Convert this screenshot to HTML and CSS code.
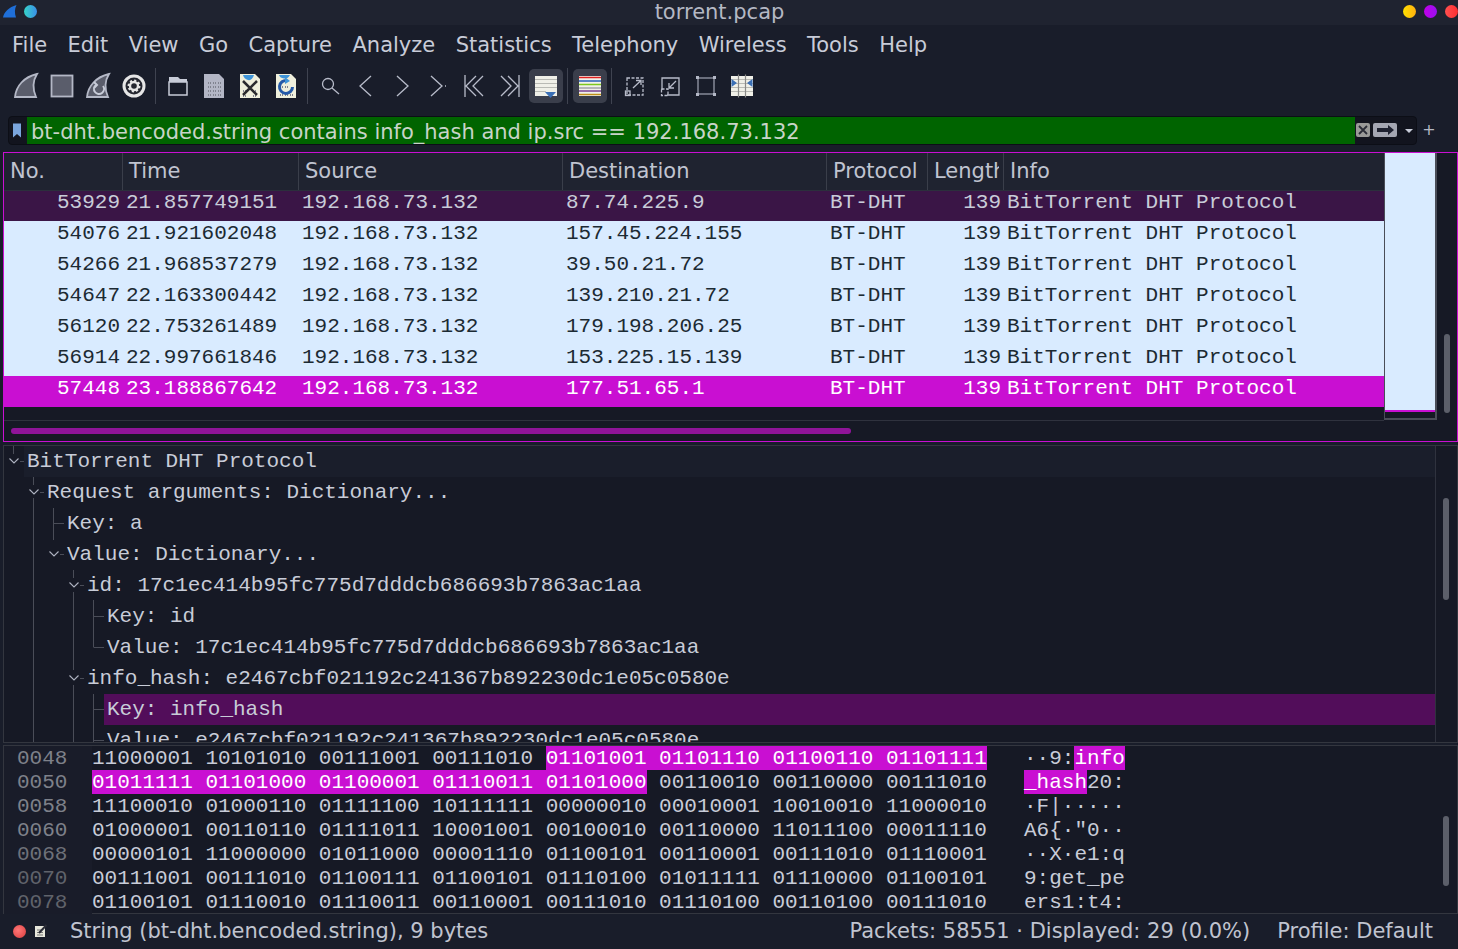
FILE: index.html
```html
<!DOCTYPE html>
<html lang="en">
<head>
<meta charset="utf-8">
<title>torrent.pcap</title>
<link rel="stylesheet" href="styles.css">
</head>
<body>
<div class="app">
  <header class="titlebar">
    <div class="title-left">
      <svg class="appicon" viewBox="0 0 14 13"><path class="shark" d="M0 12.500 C1 7 6 2 13.500 0 C11.500 4 11.500 8 13 12.500 Z"/></svg>
      <span class="dot dot-blue"></span>
    </div>
    <span class="title-text">torrent.pcap</span>
    <div class="title-right">
      <span class="dot dot-yellow"></span><span class="dot dot-purple"></span><span class="dot dot-red"></span>
    </div>
  </header>

  <nav class="menubar">
    <span>File</span><span>Edit</span><span>View</span><span>Go</span><span>Capture</span><span>Analyze</span><span>Statistics</span><span>Telephony</span><span>Wireless</span><span>Tools</span><span>Help</span>
  </nav>

  <div class="toolbar">
    <span class="tb"><svg viewBox="0 0 24 24"><path class="fin" d="M1 23 C2 12 10 3 23 0 C18 8 19 16 22 23 Z"/></svg></span>
    <span class="tb"><svg viewBox="0 0 24 24"><rect class="fin" x="1.500" y="1.500" width="21" height="21"/></svg></span>
    <span class="tb"><svg viewBox="0 0 24 24"><path class="fin" d="M1 23 C2 12 10 3 23 0 C18 8 19 16 22 23 Z"/><path class="fin-arrow" d="M17 12 A5 5 0 1 1 10 11"/><path class="fin-arrow" d="M8 8 L11 11 L8 14"/></svg></span>
    <span class="tb"><svg viewBox="0 0 24 24"><circle class="gear-o" cx="12" cy="12" r="11.500"/><circle class="gear-r" cx="12" cy="12" r="8.500"/><circle class="gear-t" cx="12" cy="12" r="5.200"/><circle class="gear-h" cx="12" cy="12" r="2.800"/></svg></span>
    <span class="sep"></span>
    <span class="tb"><svg viewBox="0 0 24 24"><path class="folder-top" d="M3 3 H12 L14 5 H21 V9 H3 Z"/><rect class="folder" x="3" y="8" width="18" height="13"/></svg></span>
    <span class="tb"><svg viewBox="0 0 24 24"><path class="doc-gray" d="M2 0 H17 L22 5 V24 H2 Z"/><path class="doc-dots" d="M6 9 H9 M11 9 H14 M16 9 H19 M6 13 H9 M11 13 H14 M16 13 H19 M6 17 H9 M11 17 H14 M16 17 H19 M6 21 H9 M11 21 H14 M16 21 H19"/></svg></span>
    <span class="tb"><svg viewBox="0 0 24 24"><path class="doc-cream" d="M2 0 H17 L22 5 V24 H2 Z"/><path class="doc-blue" d="M5 1 H16 Q14 7 10 6 Q6 5 5 1 Z"/><path class="doc-dots" d="M5 17 H9 M15 17 H19 M5 22 H9 M15 22 H19"/><path class="doc-x" d="M5 7 L19 21 M19 7 L5 21"/></svg></span>
    <span class="tb"><svg viewBox="0 0 24 24"><path class="doc-cream" d="M2 0 H17 L22 5 V24 H2 Z"/><path class="doc-blue" d="M5 1 H16 Q14 5 10 4.500 Q6 4 5 1 Z"/><path class="doc-dots" d="M6 13 H9 M11 13 H14 M6 21 H9 M11 21 H14 M16 21 H19"/><path class="doc-reload" d="M13 6.500 A6.500 6.500 0 1 0 18.500 13"/><path class="doc-blue" d="M11 3 L16 7 L11 10 Z"/></svg></span>
    <span class="sep"></span>
    <span class="tb"><svg viewBox="0 0 24 24"><circle class="ln" cx="10" cy="10" r="5.500"/><path class="ln" d="M14 14 L21 20"/></svg></span>
    <span class="tb"><svg viewBox="0 0 24 24"><path class="ln" d="M17 2 L6 12 L17 22"/></svg></span>
    <span class="tb"><svg viewBox="0 0 24 24"><path class="ln" d="M7 2 L18 12 L7 22"/></svg></span>
    <span class="tb"><svg viewBox="0 0 24 24"><path class="ln" d="M5 2 L16 12 L5 22 M19 12 H20"/></svg></span>
    <span class="tb"><svg viewBox="0 0 24 24"><path class="ln" d="M3 1 V23 M14 2 L4 12 L14 22 M21 2 L11 12 L21 22"/></svg></span>
    <span class="tb"><svg viewBox="0 0 24 24"><path class="ln" d="M21 1 V23 M10 2 L20 12 L10 22 M3 2 L13 12 L3 22"/></svg></span>
    <span class="tb active"><svg viewBox="0 0 24 24"><rect class="page" x="1" y="2" width="22" height="20"/><path class="stripes" d="M1 5.500 H23 M1 9.500 H23 M1 13.500 H23 M1 17.500 H12"/><path class="tri" d="M11 18 H22 L16.500 24 Z"/></svg></span>
    <span class="sep"></span>
    <span class="tb active"><svg viewBox="0 0 24 24"><rect class="page" x="1" y="2" width="22" height="20"/><path class="c1" d="M1 3.500 H23"/><path class="c2" d="M1 7 H23"/><path class="c3" d="M1 10.500 H23"/><path class="c4" d="M1 14 H23"/><path class="c5" d="M1 17 H23"/><path class="c6" d="M1 20.500 H23"/></svg></span>
    <span class="sep"></span>
    <span class="tb"><svg viewBox="0 0 24 24"><path class="dash" d="M5 4 H21 V21 H5 Z"/><rect class="ln" x="3.500" y="17" width="4.500" height="4.500"/><path class="ln" d="M11 14 L19 6.500 M14 6.500 H19 V11"/></svg></span>
    <span class="tb"><svg viewBox="0 0 24 24"><path class="ln" d="M4 16 V4 H21 V21 H9"/><rect class="dash" x="3.500" y="15" width="6.500" height="6.500"/><path class="ln" d="M18 7 L11 14 M11 9 V14 H16"/></svg></span>
    <span class="tb"><svg viewBox="0 0 24 24"><rect class="frame" x="4" y="4" width="16" height="16"/><path class="corners" d="M2 2 H5 V5 H2 Z M19 2 H22 V5 H19 Z M2 19 H5 V22 H2 Z M19 19 H22 V22 H19 Z"/></svg></span>
    <span class="tb"><svg viewBox="0 0 24 24"><rect class="page" x="1" y="2" width="22" height="20"/><path class="stripes" d="M1 5.500 H23 M1 9.500 H23 M1 13.500 H23 M1 17.500 H23"/><path class="col-l" d="M8.500 0.500 V23.500 M15.500 0.500 V23.500"/><path class="tri" d="M1.500 5 L7 9 L1.500 13 Z M22.500 5 L17 9 L22.500 13 Z"/></svg></span>
  </div>

  <div class="filterbar">
    <div class="filter">
      <span class="bookmark"><svg viewBox="0 0 10 14"><path class="bm" d="M1 0 H9 V14 L5 10.500 L1 14 Z"/></svg></span>
      <span class="filter-input">bt-dht.bencoded.string contains info_hash and ip.src == 192.168.73.132</span>
      <span class="f-clear"><svg viewBox="0 0 14 14"><path class="f-x" d="M3 3 L11 11 M11 3 L3 11"/></svg></span>
      <span class="f-apply"><svg viewBox="0 0 24 14"><path class="f-arrow" d="M4 5 H15 V2 L21 7 L15 12 V9 H4 Z"/></svg></span>
      <span class="f-drop"></span>
    </div>
    <span class="f-plus">+</span>
  </div>

  <section class="packets">
    <div class="pk-main">
      <div class="pk-head pk-grid">
        <span>No.</span><span>Time</span><span>Source</span><span>Destination</span><span>Protocol</span><span>Length</span><span>Info</span>
      </div>
      <div class="pk-row pk-grid mark">
        <span class="r">53929</span><span>21.857749151</span><span>192.168.73.132</span><span>87.74.225.9</span><span>BT-DHT</span><span class="r">139</span><span>BitTorrent DHT Protocol</span>
      </div>
      <div class="pk-row pk-grid plain">
        <span class="r">54076</span><span>21.921602048</span><span>192.168.73.132</span><span>157.45.224.155</span><span>BT-DHT</span><span class="r">139</span><span>BitTorrent DHT Protocol</span>
      </div>
      <div class="pk-row pk-grid plain">
        <span class="r">54266</span><span>21.968537279</span><span>192.168.73.132</span><span>39.50.21.72</span><span>BT-DHT</span><span class="r">139</span><span>BitTorrent DHT Protocol</span>
      </div>
      <div class="pk-row pk-grid plain">
        <span class="r">54647</span><span>22.163300442</span><span>192.168.73.132</span><span>139.210.21.72</span><span>BT-DHT</span><span class="r">139</span><span>BitTorrent DHT Protocol</span>
      </div>
      <div class="pk-row pk-grid plain">
        <span class="r">56120</span><span>22.753261489</span><span>192.168.73.132</span><span>179.198.206.25</span><span>BT-DHT</span><span class="r">139</span><span>BitTorrent DHT Protocol</span>
      </div>
      <div class="pk-row pk-grid plain">
        <span class="r">56914</span><span>22.997661846</span><span>192.168.73.132</span><span>153.225.15.139</span><span>BT-DHT</span><span class="r">139</span><span>BitTorrent DHT Protocol</span>
      </div>
      <div class="pk-row pk-grid current">
        <span class="r">57448</span><span>23.188867642</span><span>192.168.73.132</span><span>177.51.65.1</span><span>BT-DHT</span><span class="r">139</span><span>BitTorrent DHT Protocol</span>
      </div>
      <div class="pk-empty"></div>
      <div class="pk-hscroll"><span class="pk-hthumb"></span></div>
    </div>
    <div class="minimap"><div class="mm-body"></div><div class="mm-mark"></div></div>
    <div class="vscroll"><span class="thumb thumb-pk"></span></div>
  </section>

  <section class="tree">
    <div class="tree-main">
      <svg class="guides" viewBox="4 446 1432 296" width="1432" height="296">
        <path class="guide" d="M13.500 446 V454 M20 461.500 H24 M33.500 477 V485 M40 492.500 H44 M33.500 498 V742 M53.500 508 V540 M53.500 523.500 H64 M60 554.500 H64 M73.500 570 V578 M80 585.500 H84 M73.500 592 V670 M80 678.500 H84 M73.500 685 V742 M93.500 600 V647 M93.500 616.500 H104 M93.500 647.500 H104 M93.500 694 V742 M93.500 709.500 H104 M93.500 740.500 H104"/>
        <path class="chev" d="M9.500 458.500 L14 463 L18.500 458.500 M29.500 489.500 L34 494 L38.500 489.500 M49.500 551.500 L54 556 L58.500 551.500 M69.500 582.500 L74 587 L78.500 582.500 M69.500 675.500 L74 680 L78.500 675.500"/>
      </svg>
      <div class="t-row l0 first">BitTorrent DHT Protocol</div>
      <div class="t-row l1">Request arguments: Dictionary...</div>
      <div class="t-row l2">Key: a</div>
      <div class="t-row l2">Value: Dictionary...</div>
      <div class="t-row l3">id: 17c1ec414b95fc775d7dddcb686693b7863ac1aa</div>
      <div class="t-row l4">Key: id</div>
      <div class="t-row l4">Value: 17c1ec414b95fc775d7dddcb686693b7863ac1aa</div>
      <div class="t-row l3">info_hash: e2467cbf021192c241367b892230dc1e05c0580e</div>
      <div class="t-row l4 picked">Key: info_hash</div>
      <div class="t-row l4">Value: e2467cbf021192c241367b892230dc1e05c0580e</div>
    </div>
    <div class="vscroll"><span class="thumb thumb-tree"></span></div>
  </section>

  <section class="hex">
    <div class="hex-main">
      <div class="h-row"><span class="h-off">0048</span><span class="h-bits">11000001 10101010 00111001 00111010 <b>01101001 01101110 01100110 01101111</b></span><span class="h-asc">··9:<b>info</b></span></div>
      <div class="h-row"><span class="h-off">0050</span><span class="h-bits"><b>01011111 01101000 01100001 01110011 01101000</b> 00110010 00110000 00111010</span><span class="h-asc"><b>_hash</b>20:</span></div>
      <div class="h-row"><span class="h-off">0058</span><span class="h-bits">11100010 01000110 01111100 10111111 00000010 00010001 10010010 11000010</span><span class="h-asc">·F|·····</span></div>
      <div class="h-row"><span class="h-off">0060</span><span class="h-bits">01000001 00110110 01111011 10001001 00100010 00110000 11011100 00011110</span><span class="h-asc">A6{·"0··</span></div>
      <div class="h-row"><span class="h-off">0068</span><span class="h-bits">00000101 11000000 01011000 00001110 01100101 00110001 00111010 01110001</span><span class="h-asc">··X·e1:q</span></div>
      <div class="h-row"><span class="h-off">0070</span><span class="h-bits">00111001 00111010 01100111 01100101 01110100 01011111 01110000 01100101</span><span class="h-asc">9:get_pe</span></div>
      <div class="h-row"><span class="h-off">0078</span><span class="h-bits">01100101 01110010 01110011 00110001 00111010 01110100 00110100 00111010</span><span class="h-asc">ers1:t4:</span></div>
    </div>
    <div class="vscroll plainscroll"><span class="thumb thumb-hex"></span></div>
  </section>

  <footer class="status">
    <span class="led"></span>
    <svg class="note" viewBox="0 0 14 14"><rect class="note-page" x="1" y="2" width="10" height="11"/><path class="note-lines" d="M3 6 H7 M3 8.500 H9 M3 11 H9"/><path class="note-pen" d="M5 9 L12.500 1"/></svg>
    <span class="st-text">String (bt-dht.bencoded.string), 9 bytes</span>
    <span class="st-pk">Packets: 58551 · Displayed: 29 (0.0%)</span>
    <span class="st-prof">Profile: Default</span>
  </footer>
</div>
</body>
</html>
```

FILE: styles.css
```css
* { box-sizing: border-box; }
html, body { margin: 0; height: 100%; overflow: hidden; }
body { background: #191d2a; color: #c8ccd8; font-family: "DejaVu Sans", sans-serif; font-size: 21px; }
.app { width: 1458px; height: 949px; display: flex; flex-direction: column; }

.titlebar { height: 25px; background: #1f2330; display: flex; align-items: center; justify-content: space-between; padding: 0 0 3px 3px; position: relative; }
.title-left, .title-right { display: flex; align-items: center; }
.title-left { gap: 7px; }
.title-right { gap: 8px; }
.title-text { position: absolute; left: 0; right: 19px; top: 0; text-align: center; color: #b4b8c4; line-height: 24px; }
.appicon { width: 14px; height: 13px; }
.shark { fill: #1f6fd8; }
.dot { width: 13px; height: 13px; border-radius: 50%; display: block; }
.dot-blue { background: linear-gradient(90deg, #36d3c8, #3a8fe8); }
.dot-yellow { background: linear-gradient(90deg, #ffe000, #ffb010); }
.dot-purple { background: linear-gradient(90deg, #c000e8, #9a10f0); }
.dot-red { background: linear-gradient(90deg, #ff5050, #ff2e30); }

.menubar { height: 35px; display: flex; gap: 20.450px; padding: 4px 0 0 12px; align-items: center; color: #c8ccd8; flex: none; }

.toolbar { height: 52px; display: flex; align-items: center; padding: 0 0 0 8px; flex: none; }
.tb { width: 36px; height: 34px; display: flex; align-items: center; justify-content: center; flex: none; }
.tb svg { width: 24px; height: 24px; display: block; overflow: visible; }
.tb.active { background: #3a3e4b; border-radius: 5px; width: 34px; margin: 0 1px; }
.sep { width: 8px; height: 36px; flex: none; position: relative; }
.sep::after { content: ""; position: absolute; left: 3px; top: 0; bottom: 0; width: 1px; background: #3f4350; }

.fin { fill: #5a5d6b; stroke: #b4b8c6; stroke-width: 1.800; }
.fin-arrow { fill: none; stroke: #c8ccd8; stroke-width: 2; }
.gear-o { fill: #e6e6e6; }
.gear-r { fill: #24262f; }
.gear-t { fill: #e6e6e6; stroke: #e6e6e6; stroke-width: 2.500; stroke-dasharray: 2 2; }
.gear-h { fill: #24262f; }
.folder-top { fill: #c8ccd8; }
.folder { fill: #191d2a; stroke: #c8ccd8; stroke-width: 1.500; }
.doc-gray { fill: #b3b6c5; }
.doc-dots { stroke: #80838f; stroke-width: 2; fill: none; stroke-dasharray: 1 1; }
.doc-cream { fill: #efefdc; }
.doc-blue { fill: #3f94d8; }
.doc-x { stroke: #2a2a2e; stroke-width: 2.500; fill: none; }
.doc-reload { stroke: #2459a8; stroke-width: 3; fill: none; }
.ln { stroke: #b8bcca; stroke-width: 1.300; fill: none; }
.dash { stroke: #b8bcca; stroke-width: 1.300; fill: none; stroke-dasharray: 3 1.500; }
.page { fill: #f0f0e8; }
.stripes { stroke: #b9bab4; stroke-width: 1; fill: none; }
.tri { fill: #3a6fb5; }
.c1 { stroke: #e02020; stroke-width: 1.500; }
.c2 { stroke: #2860b8; stroke-width: 1.500; }
.c3 { stroke: #7dc81e; stroke-width: 1.500; }
.c4 { stroke: #a0a0a8; stroke-width: 1.500; }
.c5 { stroke: #7a3f90; stroke-width: 1.500; }
.c6 { stroke: #c09018; stroke-width: 1.500; }
.frame { fill: none; stroke: #6a6e7c; stroke-width: 2; }
.corners { fill: #b4b8c6; }
.col-l { stroke: #8a8a88; stroke-width: 1.200; fill: none; }

.filterbar { height: 40px; display: flex; align-items: flex-start; padding: 4px 0 0 8px; flex: none; }
.filter { width: 1409px; height: 29px; background: #12141e; border: 1px solid #0c0e16; border-radius: 4px; display: flex; align-items: stretch; }
.bookmark { width: 18px; padding-right: 2px; display: flex; align-items: center; justify-content: center; flex: none; }
.bookmark svg { width: 10px; height: 15px; }
.bm { fill: #7aa5dc; }
.filter-input { width: 1328px; background: #006400; color: #c8d4c8; padding-left: 4px; line-height: 30px; flex: none; white-space: nowrap; overflow: hidden; }
.f-clear { width: 14px; height: 14px; margin: 6px 0 0 1px; background: #9a9a98; border-radius: 2px; flex: none; }
.f-clear svg { display: block; width: 14px; height: 14px; }
.f-x { stroke: #2a2c36; stroke-width: 1.800; fill: none; }
.f-apply { width: 24px; height: 14px; margin: 6px 0 0 3px; background: #a4a6b2; border-radius: 2px; flex: none; }
.f-apply svg { display: block; width: 24px; height: 14px; }
.f-arrow { fill: #1e2130; }
.f-drop { width: 0; height: 0; border: 4px solid transparent; border-top: 4px solid #c8ccd8; border-bottom: 0; margin: 12px 0 0 8px; flex: none; }
.f-plus { margin-left: 5px; font-size: 16px; line-height: 27px; color: #b4b8c4; width: 14px; text-align: center; }

.packets { height: 290px; margin-left: 3px; border: 1px solid #c90fd2; display: flex; flex: none; background: #161925; }
.pk-main { width: 1380px; flex: none; display: flex; flex-direction: column; }
.pk-grid { display: grid; grid-template-columns: 118px 176px 264px 264px 101px 76px 1fr; }
.pk-head { height: 37px; background: #1f2330; color: #c0c4d0; line-height: 37px; flex: none; }
.pk-head span { padding-left: 6px; border-left: 1px solid #3a3e4a; overflow: hidden; white-space: nowrap; clip-path: inset(0 4px 0 0); }
.pk-head span:first-child { border-left: 0; }
.pk-row { height: 31px; font-family: "Liberation Mono", monospace; font-size: 21px; line-height: 26px; white-space: pre; flex: none; }
.pk-row span { padding-left: 4px; }
.pk-row span.r { padding: 0 2px 0 0; text-align: right; }
.mark { background: #3a1546; color: #c8ccd8; border-top: 1px solid #2b2f3c; line-height: 24px; }
.plain { background: #d9ebff; color: #1c2a33; }
.current { background: #c90fd2; color: #fff; }
.pk-empty { height: 14px; border-bottom: 1px solid #2f323e; flex: none; }
.pk-hscroll { flex: 1; padding: 7px 0 0 7px; }
.pk-hthumb { display: block; width: 840px; height: 6px; border-radius: 3px; background: #8f1499; }

.minimap { width: 53px; height: 267px; flex: none; border: 1px solid #4a4d58; border-width: 0 2px 2px 1px; display: flex; flex-direction: column; }
.mm-body { height: 257px; background: #d9ebff; flex: none; }
.mm-mark { height: 2px; background: #c90fd2; flex: none; }
.vscroll { width: 20px; flex: none; position: relative; }
.thumb { position: absolute; left: 7px; width: 6px; border-radius: 3px; background: #5c5f6a; }
.thumb-pk { top: 181px; height: 79px; }
.thumb-tree { top: 52px; height: 102px; }
.thumb-hex { top: 70px; height: 70px; }

.tree { height: 298px; margin: 3px 0 0 3px; border: 1px solid #33363f; display: flex; flex: none; background: #161925; }
.tree-main { width: 1432px; flex: none; border-right: 1px solid #2f323e; position: relative; overflow: hidden; font-family: "Liberation Mono", monospace; font-size: 21px; color: #c8ccd8; }
.guides { position: absolute; left: 0; top: 0; }
.guide { stroke: #4a4d58; stroke-width: 1; fill: none; }
.chev { stroke: #aeb2c0; stroke-width: 1.100; fill: none; }
.t-row { height: 31px; line-height: 31px; white-space: pre; position: relative; }
.l0 { padding-left: 23px; }
.l1 { padding-left: 43px; }
.l2 { padding-left: 63px; }
.l3 { padding-left: 83px; }
.l4 { padding-left: 103px; }
.first { margin-left: 20px; padding-left: 3px; background: #1a1e2b; }
.picked { margin-left: 100px; padding-left: 3px; background: #520d5a; }

.hex { height: 169px; margin: 2px 0 0 3px; border: 1px solid #33363f; display: flex; flex: none; background: #161925; }
.hex-main { width: 1432px; flex: none; font-family: "Liberation Mono", monospace; font-size: 21px; }
.h-row { height: 24px; line-height: 26px; white-space: pre; display: flex; }
.h-off { width: 88px; padding-left: 13px; color: #7e818a; flex: none; background: #191c29; }
.h-row:nth-child(n+5) .h-off { color: #6e7179; }
.h-row:nth-child(n+6) .h-off { color: #60636b; }
.h-bits { width: 932px; flex: none; color: #c8ccd8; }
.h-asc { color: #c8ccd8; }
.h-row b { font-weight: normal; padding-top: 1px; background: linear-gradient(#c90fd2, #c90fd2) no-repeat 0 0 / 100% 24px; color: #fff; }

.status { flex: 1; display: flex; align-items: center; padding: 0 25px 1px 13px; color: #c0c4d0; }
.led { width: 13px; height: 13px; border-radius: 50%; background: radial-gradient(circle at 40% 40%, #f77, #d93c3c); flex: none; }
.note { width: 14px; height: 14px; margin-left: 8px; flex: none; }
.note-page { fill: #e8e8dc; }
.note-lines { stroke: #777; stroke-width: 1; fill: none; }
.note-pen { stroke: #2a2c36; stroke-width: 2; fill: none; }
.st-text { margin-left: 22px; }
.st-pk { margin-left: auto; }
.st-prof { margin-left: 27px; }
```
